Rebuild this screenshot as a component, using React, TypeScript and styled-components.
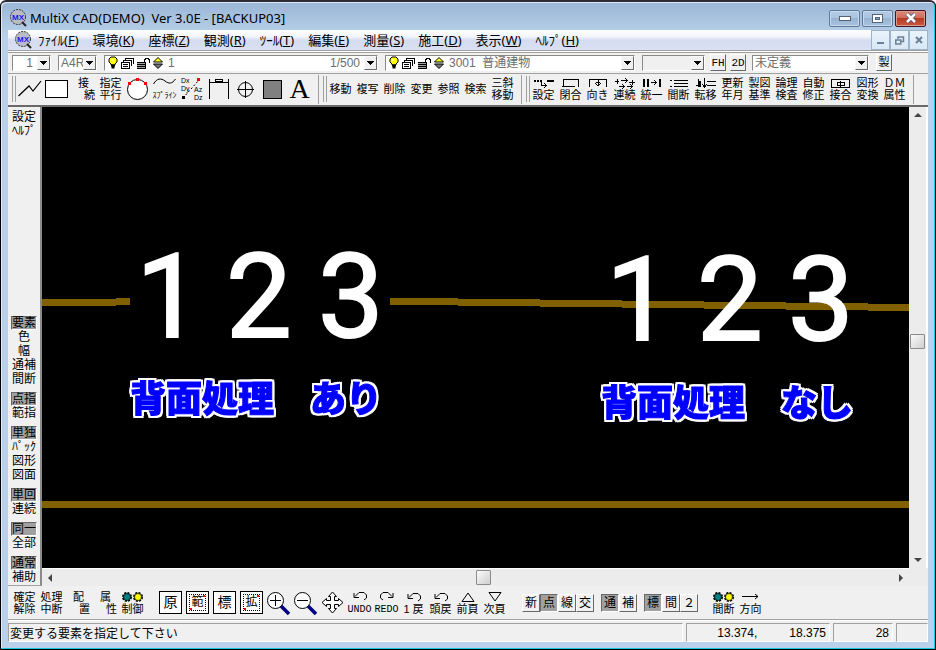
import React from "react";
import styled, { createGlobalStyle, css } from "styled-components";

const Global = createGlobalStyle`
  * { box-sizing: border-box; }
  html, body { margin: 0; padding: 0; }
  body, button, select {
    font-family: "Liberation Sans", "Noto Sans CJK JP", sans-serif;
    font-size: 12px;
    color: #000;
  }
  button, select { margin: 0; padding: 0; border: 0; background: none; }
  svg { display: block; flex: none; overflow: visible; }
`;

/* ---------- window frame ---------- */

const Frame = styled.div`
  min-height: 100vh;
  display: flex;
  flex-direction: column;
  padding: 0 7px 7px;
  background: linear-gradient(#9ab6d6 0, #b9d1ea 34px, #b9d1ea 100%);
  border: 1px solid #000;
  border-top: 2px solid #2c2a33;
  border-radius: 6px 6px 0 0;
  box-shadow: inset -1px -1px 0 #18c8dc, inset 1px 1px 0 #dce9f7;
  overflow: hidden;
`;

const TitleBar = styled.header`
  height: 28px;
  flex: none;
  display: flex;
  align-items: center;
  gap: 3px;
  padding: 4px 2px 0;
`;

const Title = styled.h1`
  flex: 1;
  margin: 0;
  font: 400 13px/18px "Noto Sans", "Noto Sans CJK JP", sans-serif;
  white-space: pre;
`;

const CaptionGroup = styled.div`
  display: flex;
  gap: 2px;
`;

const CaptionButton = styled.button<{ $danger?: boolean }>`
  width: 31px;
  height: 17px;
  display: grid;
  place-items: center;
  border: 1px solid ${(p) => (p.$danger ? "#431422" : "#5f7a99")};
  border-radius: 2px;
  box-shadow: inset 0 0 0 1px ${(p) => (p.$danger ? "#dc9a8c" : "#c6daef")};
  background: ${(p) =>
    p.$danger
      ? "linear-gradient(#d98a7a 0, #cf6c58 48%, #b93a22 50%, #c95a41 100%)"
      : "linear-gradient(#b4cbe4 0, #abc4df 48%, #98b3d1 50%, #a9c3df 100%)"};
`;

const MenuBar = styled.nav`
  height: 20px;
  flex: none;
  display: flex;
  align-items: center;
  padding-left: 7px;
  background: linear-gradient(#fff 0, #f2f4fa 35%, #d6dcf0 50%, #d9e0f3 100%);
`;

const MenuList = styled.div`
  flex: 1;
  display: flex;
  gap: 14px;
  padding-left: 6px;
`;

const MenuButton = styled.button`
  font: 400 13px/18px "Noto Sans", "Noto Sans CJK JP", sans-serif;
  white-space: nowrap;
`;

const ChildButton = styled.button`
  width: 19px;
  height: 20px;
  display: grid;
  place-items: center;
  border: 1px solid #9db4c8;
  background: linear-gradient(#e9f3fc, #d8e8f6);
`;

/* ---------- combo row ---------- */

const ComboRow = styled.div`
  height: 23px;
  flex: none;
  display: flex;
  align-items: center;
  gap: 7px;
  padding: 1px 36px 0 4px;
  background: #f0f0f0;
  border-top: 1px solid #a0a0a0;
  box-shadow: inset 0 1px 0 #fff, inset 0 2px 0 #a0a0a0;
`;

const Combo = styled.div<{ $width: number; $grow?: boolean; $muted?: boolean }>`
  flex: ${(p) => (p.$grow ? 1 : 0)} 1 ${(p) => p.$width}px;
  min-width: 0;
  height: 16px;
  display: flex;
  align-items: center;
  background: ${(p) => (p.$muted ? "#f0f0f0" : "#fff")};
  border: 1px solid #fff;
  border-top-color: #8a8a8a;
  border-left-color: #8a8a8a;
`;

const ComboSelect = styled.select<{ $align?: "right" }>`
  flex: 1;
  min-width: 0;
  height: 14px;
  appearance: none;
  font-size: 12px;
  line-height: 14px;
  padding: 0 ${(p) => (p.$align ? 4 : 0)}px 0 2px;
  color: #6d6d6d;
  white-space: pre;
  text-align: ${(p) => p.$align || "left"};
  text-align-last: ${(p) => p.$align || "left"};
`;

const ComboNote = styled.span`
  padding-right: 4px;
  color: #6d6d6d;
`;

const ComboArrow = styled.span`
  width: 13px;
  height: 14px;
  display: grid;
  place-items: center;
  flex: none;
  background: #f0f0f0;
  border: 1px solid #f8f8f8;
  border-right-color: #696969;
  border-bottom-color: #696969;
`;

const LayerIcons = styled.span`
  display: flex;
  align-items: center;
  gap: 3px;
  padding: 0 3px 0 3px;
`;

const ButtonPair = styled.div`
  display: flex;
  gap: 4px;
  margin: 0 -1px 0 -2px;
`;

const raised = css`
  border: 1px solid #fff;
  border-right-color: #696969;
  border-bottom-color: #696969;
  background: #f0f0f0;
`;

const SmallButton = styled.button`
  ${raised}
  width: 16px;
  height: 17px;
  font-family: "Liberation Mono", "Noto Sans CJK JP", monospace;
  font-size: 11px;
  line-height: 14px;
  display: flex;
  justify-content: center;
  align-items: center;
`;

/* ---------- toolbars ---------- */

const ToolRow = styled.div`
  height: 34px;
  flex: none;
  display: flex;
  align-items: center;
  padding-bottom: 1px;
  background: #f0f0f0;
  border-top: 1px solid #a0a0a0;
  border-bottom: 2px solid #696969;
`;

const BottomRow = styled(ToolRow)`
  border-top: 0;
  border-bottom: 1px solid #a0a0a0;
  padding: 0 0 0 3px;
`;

const Gripper = styled.span`
  width: 4px;
  height: 26px;
  flex: none;
  margin-left: 4px;
  border: 1px solid #a0a0a0;
  border-width: 0 1px;
`;

const Divider = styled.span`
  width: 1px;
  height: 29px;
  flex: none;
  background: #a0a0a0;
  margin-left: 5px;
`;

const ToolGroup = styled.div<{ $before?: number }>`
  display: flex;
  flex: none;
  margin-left: ${(p) => p.$before || 0}px;
`;

const Tool = styled.button`
  width: 27px;
  height: 28px;
  display: flex;
  flex-direction: column;
  align-items: center;
  justify-content: center;
  font-size: 11px;
  line-height: 12px;
  white-space: nowrap;
`;

const Stagger = styled.span`
  width: 23px;
  display: flex;
  flex-direction: column;

  & > :last-child { align-self: flex-end; }
`;

const IconSlot = styled.span`
  height: 12px;
  display: flex;
  align-items: center;
`;

const Kana = styled.span`
  font-size: 8px;
  line-height: 12px;
`;

const Code = styled.span`
  font-family: "Liberation Mono", monospace;
  font-size: 10px;
  line-height: 12px;
`;

const LetterA = styled.span`
  font: 400 28px/28px "Liberation Serif", serif;
`;

const Boxed = styled.span<{ $dotted?: boolean }>`
  width: 23px;
  height: 23px;
  padding: 2px;
  background: #fff;
  border: 1px solid #000;

  & > span {
    display: block;
    height: 17px;
    font-size: ${(p) => (p.$dotted ? 12 : 14)}px;
    line-height: 15px;
    border: 1px dotted ${(p) => (p.$dotted ? "#000" : "transparent")};
    background: ${(p) =>
      p.$dotted
        ? "linear-gradient(#f00, #f00) 100% 0 / 2px 2px no-repeat, linear-gradient(#f00, #f00) 0 100% / 2px 2px no-repeat"
        : "none"};
  }
`;

const Toggles = styled.div`
  display: flex;
  gap: 7px;
  margin: 0 12px 0 14px;
`;

const ToggleGroup = styled.div`
  display: flex;
`;

const Toggle = styled.button`
  ${raised}
  width: 18px;
  height: 18px;
  font-size: 12px;
  line-height: 16px;
  display: flex;
  justify-content: center;
  align-items: center;

  &[aria-pressed="true"] {
    background: #a0a0a0;
    border-color: #696969 #fff #fff #696969;
  }
`;

/* ---------- work area ---------- */

const Work = styled.main`
  flex: 1;
  min-height: 0;
  display: grid;
  grid-template-columns: 34px minmax(0, 1fr) 19px;
  grid-template-rows: minmax(0, 1fr) 18px;
  background: #f0f0f0;
`;

const SideBar = styled.aside`
  grid-row: 1 / 3;
  display: flex;
  flex-direction: column;
  gap: 6px;
  padding: 3px 3px 1px;
  border-right: 2px solid #8a8a8a;
  border-bottom: 1px solid #a0a0a0;
`;

const SideGroup = styled.div<{ $first?: boolean }>`
  display: flex;
  flex-direction: column;
  margin-bottom: ${(p) => (p.$first ? "auto" : "0")};
`;

const SideButton = styled.button`
  height: 14px;
  border: 1px solid transparent;
  font-size: 12px;
  line-height: 12px;
  display: flex;
  justify-content: center;
  align-items: center;
  white-space: nowrap;

  &[aria-pressed="true"] {
    background: #a0a0a0;
    border-color: #696969 #fff #fff #696969;
  }
`;

const Drawing = styled.svg`
  width: 100%;
  height: 100%;
  min-height: 461px;
  background: #000;
  overflow: hidden;
`;

const Caption = styled.text`
  font-family: "Noto Sans CJK JP", sans-serif;
  font-size: 36px;
  font-weight: 900;
  fill: #00f;
  stroke: #00f;
  stroke-width: 1px;
  filter: drop-shadow(2px 0 0 #fff) drop-shadow(-2px 0 0 #fff) drop-shadow(0 2px 0 #fff) drop-shadow(0 -2px 0 #fff);
`;

const Scroll = styled.div<{ $vertical?: boolean }>`
  display: flex;
  flex-direction: ${(p) => (p.$vertical ? "column" : "row")};
  align-items: center;
  background: #ececec;
  border: 0 solid #fff;
  border-width: ${(p) => (p.$vertical ? "0 2px 0 0" : "1px 0 0")};
`;

const ScrollArrow = styled.button`
  width: 17px;
  height: 17px;
  display: grid;
  place-items: center;
`;

const Track = styled.span<{ $share: number }>`
  flex: ${(p) => p.$share} 1 0;
`;

const Thumb = styled.button`
  width: 15px;
  height: 15px;
  flex: none;
  border: 1px solid #8c8c8c;
  border-radius: 1px;
  background: linear-gradient(135deg, #fafafa, #cfcfcf);
`;

const Corner = styled.div`
  background: #ececec;
`;

/* ---------- status bar ---------- */

const StatusBar = styled.footer`
  height: 22px;
  flex: none;
  display: flex;
  gap: 3px;
  padding-top: 3px;
  background: #f0f0f0;
  box-shadow: inset 0 1px 0 #fff;
`;

const Panel = styled.div<{ $width?: number }>`
  flex: ${(p) => (p.$width ? `0 0 ${p.$width}px` : "1 1 0")};
  display: flex;
  align-items: center;
  justify-content: ${(p) => (p.$width ? "flex-end" : "flex-start")};
  gap: 32px;
  padding: 0 3px 0 1px;
  border: 1px solid #fff;
  border-top-color: #a0a0a0;
  border-left-color: #a0a0a0;
  white-space: nowrap;
`;

/* ---------- icons ---------- */

const Logo = () => (
  <svg width="17" height="18" viewBox="0 0 17 18" aria-hidden="true">
    <circle cx="8" cy="8" r="7.5" fill="#b9bcc4" stroke="#333" strokeDasharray="2 1" />
    <path d="M12 13l4 4" stroke="#222" strokeWidth="2" />
    <text x="8" y="11" fontSize="8" fontWeight="700" textAnchor="middle" fill="#1a1af0">MX</text>
  </svg>
);

const DownArrow = () => (
  <svg width="7" height="4" viewBox="0 0 7 4" aria-hidden="true" shapeRendering="crispEdges">
    <path d="M0 0H7L3.5 4Z" />
  </svg>
);

const Bulb = () => (
  <svg width="10" height="13" viewBox="0 0 10 13" aria-hidden="true">
    <path d="M3 1H7L9 3V6L7 8V9H3V8L1 6V3Z" fill="#ff0" stroke="#000" />
    <path d="M3 9.500H7M3.500 11.500H6.500" stroke="#000" strokeWidth="2" />
    <path d="M4 3V5" stroke="#fff" />
  </svg>
);

const Sheets = () => (
  <svg width="13" height="12" viewBox="0 0 13 12" aria-hidden="true" shapeRendering="crispEdges">
    <path d="M4 1.500H13M12.500 1V7M2 3.500H11M10.500 3V9M4.500 1V3M2.500 3V5" stroke="#000" fill="none" />
    <rect x="0.500" y="5.500" width="8" height="6" fill="#fff" stroke="#000" />
    <path d="M2 7.500H7M2 9.500H7" stroke="#000" />
  </svg>
);

const OpenLock = () => (
  <svg width="13" height="12" viewBox="0 0 13 12" aria-hidden="true" shapeRendering="crispEdges">
    <path d="M0 5H9V12H0Z" fill="#000" />
    <path d="M0 6.500H8M0 8.500H8M0 10.500H8" stroke="#a0a0a0" />
    <path d="M7.500 5V2.500L9 1.500H11L12.500 3V6" fill="none" stroke="#000" strokeWidth="1.500" />
  </svg>
);

const UpDown = () => (
  <svg width="10" height="12" viewBox="0 0 10 12" aria-hidden="true">
    <path d="M5 0.500L9.500 5H0.500Z" fill="#ff0" stroke="#000" />
    <path d="M0.500 7H9.500L5 11.500Z" fill="#777" stroke="#000" />
  </svg>
);

const PolylineIcon = () => (
  <svg width="24" height="24" viewBox="0 0 24 24" aria-hidden="true">
    <path d="M0.500 19L11 9L15 14L23 4" fill="none" stroke="#000" strokeWidth="1.200" />
  </svg>
);

const RectIcon = () => (
  <svg width="23" height="24" viewBox="0 0 23 24" aria-hidden="true">
    <rect x="0.500" y="3.500" width="22" height="17" fill="#fff" stroke="#000" />
  </svg>
);

const CircleIcon = () => (
  <svg width="23" height="24" viewBox="0 0 23 24" aria-hidden="true">
    <circle cx="11.500" cy="12.500" r="10" fill="#fff" stroke="#000" />
    <path d="M10 1h3v3h-3zM2 5h3v3h-3zM18 5h3v3h-3z" fill="#f00" />
  </svg>
);

const WaveIcon = () => (
  <svg width="23" height="8" viewBox="0 0 23 8" aria-hidden="true">
    <path d="M0.500 6C4 0 8 0 12 3S19 6 22.500 1" fill="none" stroke="#000" />
  </svg>
);

const DeltaIcon = () => (
  <svg width="22" height="24" viewBox="0 0 22 24" aria-hidden="true">
    <g fontSize="7">
      <text x="0" y="6">Dx</text>
      <text x="0" y="14">Dy</text>
      <text x="13" y="15">Az</text>
      <text x="13" y="23">Dz</text>
    </g>
    <path d="M2 21L18 3" stroke="#000" strokeDasharray="2 2" />
    <path d="M16 1h3v3h-3z" fill="#f00" />
    <path d="M1 19h3v3h-3z" />
  </svg>
);

const DimensionIcon = () => (
  <svg width="22" height="24" viewBox="0 0 22 24" aria-hidden="true" shapeRendering="crispEdges">
    <path d="M1.500 2V22M20.500 2V22M1 5.500H21" stroke="#000" />
    <rect x="7.500" y="2.500" width="7" height="2" fill="#f0f0f0" stroke="#000" />
  </svg>
);

const CrossCircleIcon = () => (
  <svg width="17" height="17" viewBox="0 0 17 17" aria-hidden="true">
    <circle cx="8.500" cy="8.500" r="7" fill="none" stroke="#000" />
    <path d="M8.500 0V17M0 8.500H17" stroke="#000" />
  </svg>
);

const FillIcon = () => (
  <svg width="19" height="19" viewBox="0 0 19 19" aria-hidden="true">
    <rect x="0.500" y="0.500" width="18" height="18" fill="#808080" stroke="#000" />
  </svg>
);

const lineIcons: Record<string, React.ReactNode> = {
  設定: (
    <>
      <path d="M0 3H2M3 3H5M6 3H8M13 3H20" strokeWidth="2" />
      <path d="M7.500 4V7.500H12M10 5L12.500 7.500L10 10" />
    </>
  ),
  閉合: <path d="M1 8.500H14M2.500 9V1.500H17.500V9" />,
  向き: <path d="M1.500 9V1.500H18.500V9M10 2V8M7 5L10 8L13 5M8 4.500H12" />,
  連続: <path d="M0 3.500H4M2.500 1V6M6 2.500H12M10 0L12.500 2.500L10 5M4 8.500H9M7 6L9.500 8.500L7 11M14 4.500H20M17.500 2V7M12 8.500H17M15 6L17.500 8.500L15 11" />,
  統一: (
    <>
      <path d="M2 1V9M6 1V9M18 1V9" strokeWidth="2" />
      <path d="M9 4.500H14M12 2L14.500 4.500L12 7" />
    </>
  ),
  間断: (
    <>
      <path d="M5 2.500H19M5 5.500H19M5 8.500H19" />
      <path d="M1 2.500H3M1 8.500H3" />
    </>
  ),
  転移: (
    <>
      <path d="M2 1V9M0 7.500H2M11 3.500H20M11 7.500H20" />
      <path d="M4 3V9" strokeWidth="2" />
      <path d="M8.500 0V9M6 6L8.500 9L11 6" />
    </>
  ),
  接合: <path d="M0.500 1.500H18.500V9.500H0.500ZM6 4H13V7H6ZM9.500 3V9" />,
};

const LineIcon = ({ name }: { name: string }) => (
  <svg width="20" height="10" viewBox="0 0 20 10" fill="none" stroke="#000" aria-hidden="true" shapeRendering="crispEdges">
    {lineIcons[name]}
  </svg>
);

const Lamps = () => (
  <svg width="22" height="10" viewBox="0 0 22 10" aria-hidden="true">
    {[5, 16].map((x, i) => (
      <g key={x}>
        <circle cx={x} cy="5" r="4" fill="none" stroke="#000" strokeWidth="2" strokeDasharray="2 1.14" />
        <circle cx={x} cy="5" r="3.500" fill={i ? "#ff0" : "#008080"} stroke="#000" strokeWidth="0.700" />
      </g>
    ))}
  </svg>
);

const Magnifier = ({ plus }: { plus?: boolean }) => (
  <svg width="23" height="24" viewBox="0 0 23 24" aria-hidden="true">
    <path d="M14 15L22 23" stroke="#000080" strokeWidth="3.500" />
    <circle cx="8.500" cy="9.500" r="8" fill="#fff" stroke="#000" />
    <path d={plus ? "M3 9.500H14M8.500 4V15" : "M3 9.500H14"} stroke="#000" />
  </svg>
);

const PanIcon = () => (
  <svg width="23" height="23" viewBox="0 0 23 23" aria-hidden="true">
    <path
      d="M11.500 1L15.500 5.500H13.500V9.500H17.500V7.500L22 11.500L17.500 15.500V13.500H13.500V17.500H15.500L11.500 22L7.500 17.500H9.500V13.500H5.500V15.500L1 11.500L5.500 7.500V9.500H9.500V5.500H7.500Z"
      fill="#fff"
      stroke="#000"
    />
  </svg>
);

const TurnIcon = ({ forward }: { forward?: boolean }) => (
  <svg width="16" height="10" viewBox="0 0 16 10" aria-hidden="true">
    <path
      d={forward ? "M4 9L1.500 7V4L4 1.500H9L13 5.500M14 2V6.500H9" : "M12 9L14.500 7V4L12 1.500H7L3 5.500M2 2V6.500H7"}
      fill="none"
      stroke="#000"
    />
  </svg>
);

const PageIcon = ({ down }: { down?: boolean }) => (
  <svg width="14" height="10" viewBox="0 0 14 10" aria-hidden="true">
    <path d={down ? "M1 0.500H13L7 9Z" : "M7 1L13 9.500H1Z"} fill="none" stroke="#000" />
  </svg>
);

const RightArrow = () => (
  <svg width="17" height="7" viewBox="0 0 17 7" aria-hidden="true">
    <path d="M0 3.500H16M13 1L16 3.500L13 6" fill="none" stroke="#000" />
  </svg>
);

const scrollPaths = {
  up: "M0 5L4 1L8 5Z",
  down: "M0 2L4 6L8 2Z",
  left: "M5 0L1 4L5 8Z",
  right: "M2 0L6 4L2 8Z",
};

const ScrollGlyph = ({ to }: { to: keyof typeof scrollPaths }) => (
  <svg width="8" height="8" viewBox="0 0 8 8" aria-hidden="true">
    <path d={scrollPaths[to]} fill="#444" />
  </svg>
);

/* ---------- data ---------- */

const menus = [
  ["ﾌｧｲﾙ", "F"], ["環境", "K"], ["座標", "Z"], ["観測", "R"], ["ﾂｰﾙ", "T"],
  ["編集", "E"], ["測量", "S"], ["施工", "D"], ["表示", "W"], ["ﾍﾙﾌﾟ", "H"],
];

const editTools = ["移動", "複写", "削除", "変更", "参照", "検索"];

const figureTools = [
  ["", "設定"], ["", "閉合"], ["", "向き"], ["", "連続"], ["", "統一"], ["", "間断"], ["", "転移"],
  ["更新", "年月"], ["製図", "基準"], ["論理", "検査"], ["自動", "修正"], ["", "接合"],
  ["図形", "変換"], ["ＤＭ", "属性"],
];

const sideGroups = [
  ["要素", "色", "幅", "通補", "間断"],
  ["点指", "範指"],
  ["単独", "ﾊﾟｯｸ", "図形", "図面"],
  ["単回", "連続"],
  ["同一", "全部"],
  ["通常", "補助"],
];

const toggleGroups = [
  { items: ["新", "点", "線", "交"], on: "点" },
  { items: ["通", "補"], on: "通" },
  { items: ["標", "間", "２"], on: "標" },
];

const viewBoxes: [string, boolean][] = [["原", false], ["範", true], ["標", false], ["拡", true]];

const samples = [
  { top: 230, digits: [94, 184, 276], textX: 88, textY: 305, label: "背面処理　あり" },
  { top: 233, digits: [564, 655, 746], textX: 559, textY: 309, label: "背面処理　なし" },
];

/* ---------- parts ---------- */

const LayerCombo = ({ width, label, value, note }: { width: number; label: string; value: string; note?: string }) => (
  <Combo $width={width} $grow>
    <LayerIcons><Bulb /><Sheets /><OpenLock /><UpDown /></LayerIcons>
    <ComboSelect aria-label={label}><option>{value}</option></ComboSelect>
    {note && <ComboNote>{note}</ComboNote>}
    <ComboArrow><DownArrow /></ComboArrow>
  </Combo>
);

const StackTool = ({ top, label }: { top: React.ReactNode; label: React.ReactNode }) => (
  <Tool>
    <IconSlot>{top}</IconSlot>
    <span>{label}</span>
  </Tool>
);

const CadDrawing = () => (
  <Drawing role="img" aria-label="図面">
    <path
      d="M0 195.500H74M74 194.500H88M348 194.500H416M416 195.500H498M498 196.500H580M580 197.500H662M662 198.500H744M744 199.500H826M826 200.500H3000M0 397.500H3000"
      stroke="#806000"
      strokeWidth="7"
      shapeRendering="crispEdges"
    />
    {samples.map((s) => (
      <g key={s.label}>
        <g fontFamily="Roboto, sans-serif" fontSize="117" fill="#fff" stroke="#fff" strokeWidth="2">
          {s.digits.map((x, i) => (
            <text key={x} x={x} y={s.top}>{i + 1}</text>
          ))}
        </g>
        <Caption x={s.textX} y={s.textY}>{s.label}</Caption>
      </g>
    ))}
  </Drawing>
);

export default function App() {
  return (
    <>
      <Global />
      <Frame>
        <TitleBar>
          <Logo />
          <Title>{"MultiX CAD(DEMO)  Ver 3.0E - [BACKUP03]"}</Title>
          <CaptionGroup>
            <CaptionButton aria-label="最小化">
              <svg width="12" height="5" viewBox="0 0 12 5"><rect x="0.500" y="0.500" width="11" height="4" fill="#fff" stroke="#53647a" /></svg>
            </CaptionButton>
            <CaptionButton aria-label="最大化">
              <svg width="11" height="9" viewBox="0 0 11 9">
                <rect x="0.500" y="0.500" width="10" height="8" fill="#fff" stroke="#53647a" />
                <rect x="3.500" y="3.500" width="4" height="2" fill="#8aa5c5" stroke="#53647a" />
              </svg>
            </CaptionButton>
            <CaptionButton $danger aria-label="閉じる">
              <svg width="12" height="10" viewBox="0 0 12 10">
                <path d="M2 1L10 9M10 1L2 9" stroke="#53506a" strokeWidth="4" />
                <path d="M2 1L10 9M10 1L2 9" stroke="#fff" strokeWidth="2.500" />
              </svg>
            </CaptionButton>
          </CaptionGroup>
        </TitleBar>

        <MenuBar>
          <Logo />
          <MenuList>
            {menus.map(([name, key]) => (
              <MenuButton key={key}>{name}(<u>{key}</u>)</MenuButton>
            ))}
          </MenuList>
          <ChildButton aria-label="ウィンドウを最小化">
            <svg width="7" height="8" viewBox="0 0 7 8"><path d="M0 7H7" stroke="#6c8196" strokeWidth="2" /></svg>
          </ChildButton>
          <ChildButton aria-label="元に戻す">
            <svg width="9" height="9" viewBox="0 0 9 9" fill="none" stroke="#6c8196">
              <path d="M3 3V1H8.500V5.500H6" strokeWidth="1.500" />
              <rect x="0.750" y="4" width="5" height="4" strokeWidth="1.500" />
            </svg>
          </ChildButton>
          <ChildButton aria-label="ウィンドウを閉じる">
            <svg width="8" height="8" viewBox="0 0 8 8"><path d="M1 1L7 7M7 1L1 7" stroke="#6c8196" strokeWidth="2" /></svg>
          </ChildButton>
        </MenuBar>

        <ComboRow>
          <Combo $width={39}>
            <ComboSelect $align="right" aria-label="図面番号"><option>1</option></ComboSelect>
            <ComboArrow><DownArrow /></ComboArrow>
          </Combo>
          <Combo $width={39}>
            <ComboSelect aria-label="用紙"><option>A4R</option></ComboSelect>
            <ComboArrow><DownArrow /></ComboArrow>
          </Combo>
          <LayerCombo width={274} label="縮尺" value="1" note="1/500" />
          <LayerCombo width={250} label="レイヤ" value={"3001\u00a0\u00a0普通建物"} />
          <Combo $width={63} $muted>
            <ComboSelect aria-label="線種"><option></option></ComboSelect>
            <ComboArrow><DownArrow /></ComboArrow>
          </Combo>
          <ButtonPair>
            <SmallButton>FH</SmallButton>
            <SmallButton>2D</SmallButton>
          </ButtonPair>
          <Combo $width={117}>
            <ComboSelect aria-label="定義"><option>未定義</option></ComboSelect>
            <ComboArrow><DownArrow /></ComboArrow>
          </Combo>
          <SmallButton>製</SmallButton>
        </ComboRow>

        <ToolRow>
          <Gripper />
          <ToolGroup>
            <Tool aria-label="線"><PolylineIcon /></Tool>
            <Tool aria-label="四角"><RectIcon /></Tool>
            <Tool><Stagger><span>接</span><span>続</span></Stagger></Tool>
            <Tool><span>指定</span><span>平行</span></Tool>
            <Tool aria-label="円"><CircleIcon /></Tool>
            <StackTool top={<WaveIcon />} label={<Kana>ｽﾌﾟﾗｲﾝ</Kana>} />
            <Tool><DeltaIcon /></Tool>
            <Tool aria-label="寸法"><DimensionIcon /></Tool>
            <Tool aria-label="点"><CrossCircleIcon /></Tool>
            <Tool aria-label="塗り"><FillIcon /></Tool>
            <Tool><LetterA>A</LetterA></Tool>
          </ToolGroup>
          <Divider />
          <Gripper />
          <ToolGroup>
            {editTools.map((t) => <Tool key={t}>{t}</Tool>)}
            <Tool><span>三斜</span><span>移動</span></Tool>
          </ToolGroup>
          <Divider />
          <Gripper />
          <ToolGroup>
            {figureTools.map(([top, label]) => (
              <StackTool key={label} top={top || <LineIcon name={label} />} label={label} />
            ))}
          </ToolGroup>
          <Divider />
        </ToolRow>

        <Work>
          <SideBar>
            <SideGroup $first>
              <SideButton>設定</SideButton>
              <SideButton>ﾍﾙﾌﾟ</SideButton>
            </SideGroup>
            {sideGroups.map((group) => (
              <SideGroup key={group[0]}>
                {group.map((name, i) => (
                  <SideButton key={name} aria-pressed={i === 0}>{name}</SideButton>
                ))}
              </SideGroup>
            ))}
          </SideBar>
          <CadDrawing />
          <Scroll $vertical>
            <ScrollArrow aria-label="上へ"><ScrollGlyph to="up" /></ScrollArrow>
            <Track $share={210} />
            <Thumb aria-label="縦スクロール" />
            <Track $share={202} />
            <ScrollArrow aria-label="下へ"><ScrollGlyph to="down" /></ScrollArrow>
          </Scroll>
          <Scroll>
            <ScrollArrow aria-label="左へ"><ScrollGlyph to="left" /></ScrollArrow>
            <Track $share={417} />
            <Thumb aria-label="横スクロール" />
            <Track $share={401} />
            <ScrollArrow aria-label="右へ"><ScrollGlyph to="right" /></ScrollArrow>
          </Scroll>
          <Corner />
        </Work>

        <BottomRow>
          <ToolGroup>
            <Tool><span>確定</span><span>解除</span></Tool>
            <Tool><span>処理</span><span>中断</span></Tool>
            <Tool><Stagger><span>配</span><span>置</span></Stagger></Tool>
            <Tool><Stagger><span>属</span><span>性</span></Stagger></Tool>
            <StackTool top={<Lamps />} label="制御" />
          </ToolGroup>
          <ToolGroup $before={11}>
            {viewBoxes.map(([name, dotted]) => (
              <Tool key={name}><Boxed $dotted={dotted}><span>{name}</span></Boxed></Tool>
            ))}
            <Tool aria-label="拡大"><Magnifier plus /></Tool>
            <Tool aria-label="縮小"><Magnifier /></Tool>
            <Tool aria-label="移動"><PanIcon /></Tool>
            <StackTool top={<TurnIcon />} label={<Code>UNDO</Code>} />
            <StackTool top={<TurnIcon forward />} label={<Code>REDO</Code>} />
            <StackTool top={<TurnIcon />} label="1 戻" />
            <StackTool top={<TurnIcon />} label="頭戻" />
            <StackTool top={<PageIcon />} label="前頁" />
            <StackTool top={<PageIcon down />} label="次頁" />
          </ToolGroup>
          <Toggles>
            {toggleGroups.map((g) => (
              <ToggleGroup key={g.on}>
                {g.items.map((name) => (
                  <Toggle key={name} aria-pressed={name === g.on}>{name}</Toggle>
                ))}
              </ToggleGroup>
            ))}
          </Toggles>
          <ToolGroup>
            <StackTool top={<Lamps />} label="間断" />
            <StackTool top={<RightArrow />} label="方向" />
          </ToolGroup>
        </BottomRow>

        <StatusBar>
          <Panel>変更する要素を指定して下さい</Panel>
          <Panel $width={144}><span>13.374,</span><span>18.375</span></Panel>
          <Panel $width={60}>28</Panel>
          <Panel $width={32} />
        </StatusBar>
      </Frame>
    </>
  );
}
